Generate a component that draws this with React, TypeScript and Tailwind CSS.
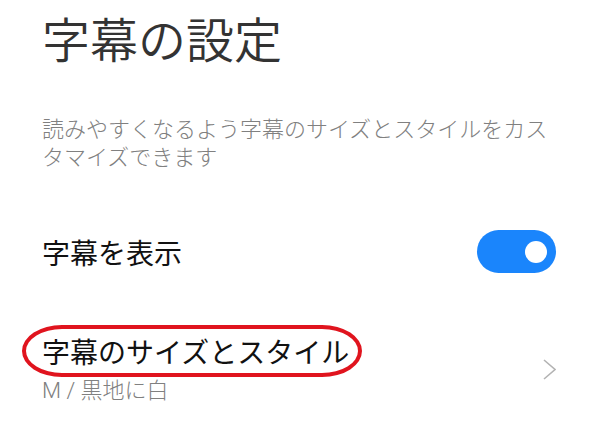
import React from "react";

export default function App() {
  return (
    <div className="w-[600px] h-[435px] bg-white pl-[42px] pr-[44px] pt-[13px] font-['Noto_Sans_CJK_JP','Noto_Sans',sans-serif] overflow-hidden">
      <h1 className="text-[48px] leading-[48px] text-[#333333] font-[350]">字幕の設定</h1>
      <p className="mt-[52px] w-[512px] text-[22px] leading-[28px] text-[#808080] font-light">
        読みやすくなるよう字幕のサイズとスタイルをカスタマイズできます
      </p>
      <div className="mt-[61px] flex items-center justify-between">
        <span className="text-[28px] leading-[28px] text-[#111111]">字幕を表示</span>
        <div className="w-[79px] h-[43px] rounded-full bg-[#1a85fc] flex items-center justify-end pr-[9px]">
          <div className="w-[22px] h-[22px] rounded-full bg-white" />
        </div>
      </div>
      <div className="mt-[64px] flex items-center justify-between">
        <div className="flex flex-col">
          <div className="relative">
            <span className="text-[28px] leading-[28px] text-[#111111]">字幕のサイズとスタイル</span>
            <div className="absolute left-[-20px] top-[-12px] w-[340px] h-[52px] border-[4px] border-[#e0141e] rounded-[40px/26px]" />
          </div>
          <span className="mt-[12px] text-[22px] leading-[22px] text-[#808080] font-light font-['Roboto','Noto_Sans_CJK_JP',sans-serif]">M / 黒地に白</span>
        </div>
        <svg width="13" height="21" viewBox="0 0 13 21">
          <polyline points="1,1 12,10.5 1,20" fill="none" stroke="#b3b3b3" strokeWidth="1.6" />
        </svg>
      </div>
    </div>
  );
}
